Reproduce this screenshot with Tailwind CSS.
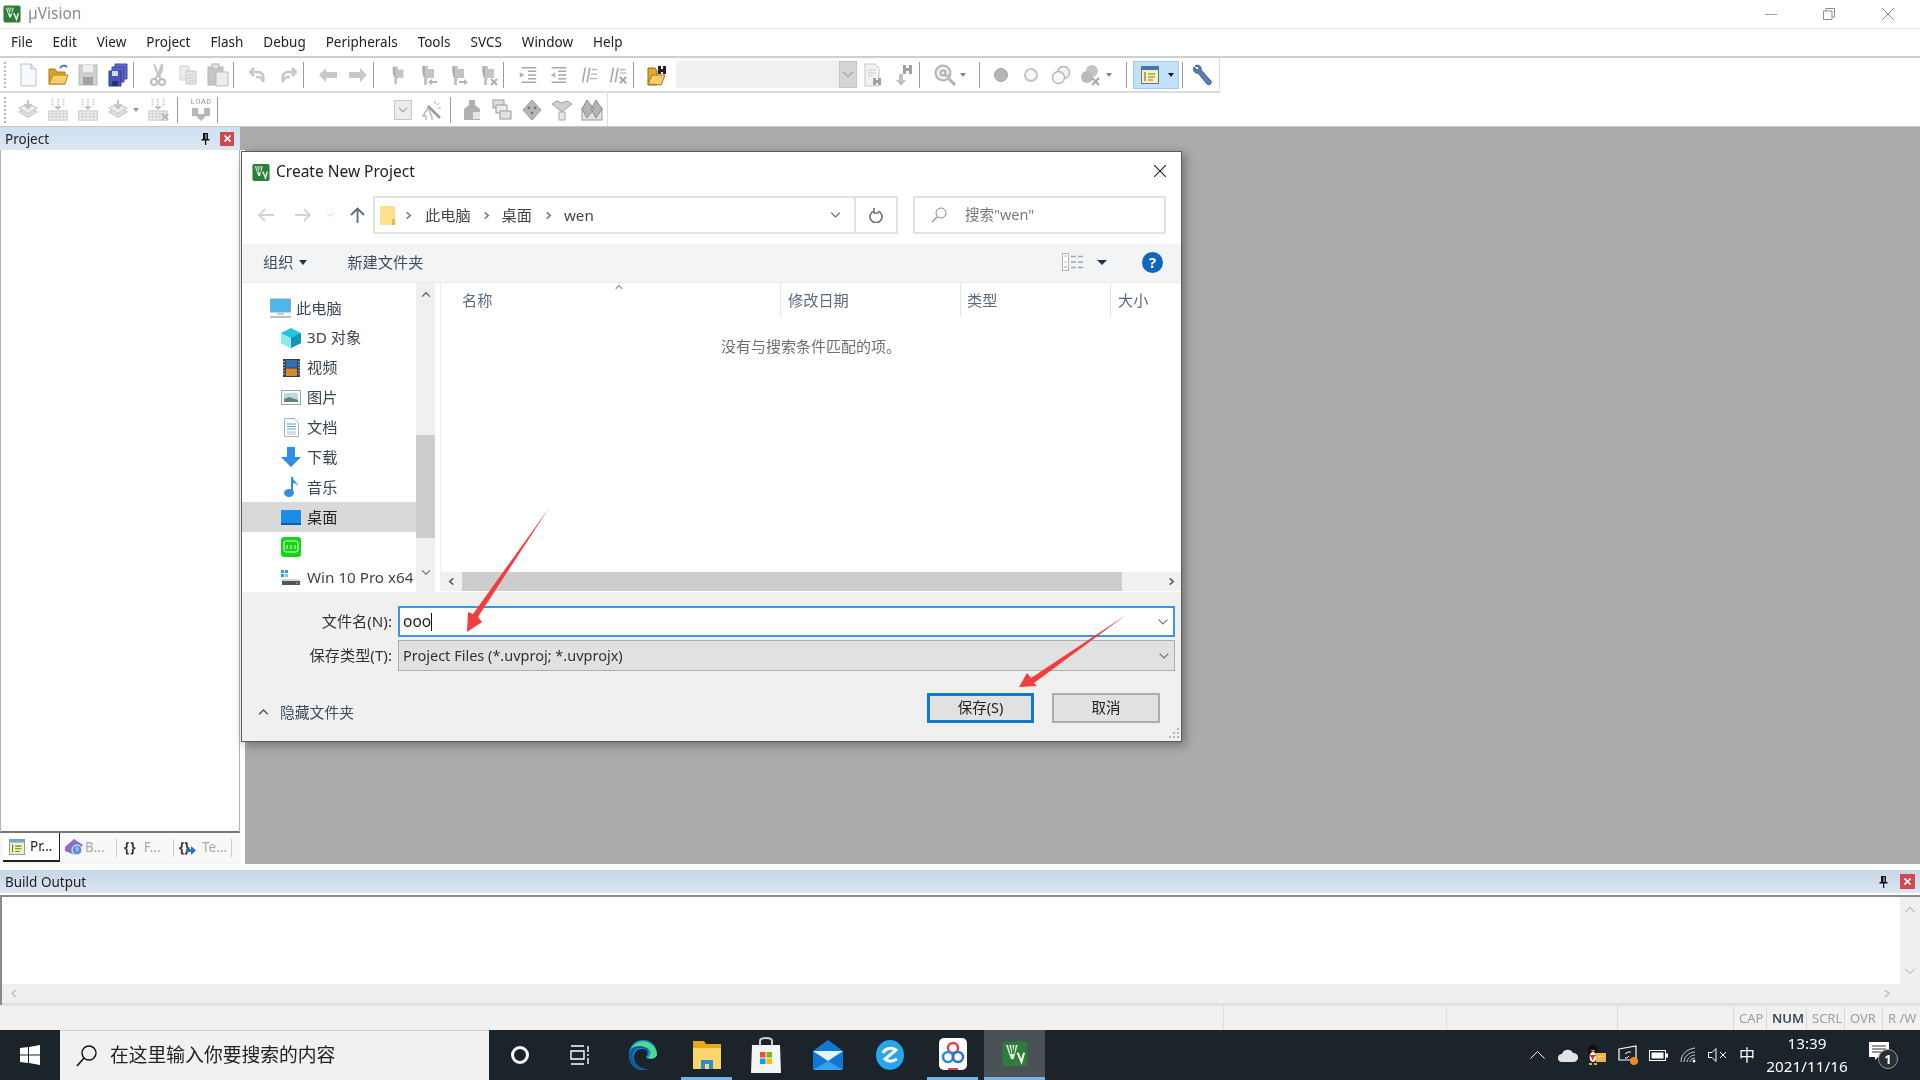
<!DOCTYPE html>
<html lang="zh">
<head>
<meta charset="utf-8">
<title>µVision</title>
<script src="https://cdn.jsdelivr.net/npm/@tailwindcss/browser@4"></script>
</head>
<body class="m-0 overflow-hidden bg-white">
<svg class="hidden" width="0" height="0">
  <defs>
    <symbol id="keil" viewBox="0 0 20 20">
      <rect x="0.5" y="0.5" width="19" height="19" rx="2" fill="#2f7d3a"/>
      <path d="M3 3h9l-3 11h-2z" fill="#d8ecd8"/>
      <path d="M5 3l2 7M7.5 3l1 7M10 3l-1 7" stroke="#2f7d3a" stroke-width="1"/>
      <path d="M12 9l3 7 2-7" fill="none" stroke="#e8f4e8" stroke-width="1.6"/>
    </symbol>
    <symbol id="bm" viewBox="0 0 24 24"><path d="M6 3h6v3h6v9h-6l-1 2v5H8v-8L6 9z" fill="#c4c4c4"/><path d="M8 3v11" stroke="#a5a5a5" stroke-width="1.5"/></symbol>
    <symbol id="ind" viewBox="0 0 24 24"><path d="M5 4h16M12 8h9M12 12h9M12 16h9M5 20h16" stroke="#a9a9a9" stroke-width="1.6"/><path d="M3 9l5 3-5 3z" fill="#b5b5b5"/></symbol>
    <symbol id="stack" viewBox="0 0 26 26"><path d="M13 10l10 5-10 6-10-6z" fill="#e2e2e2" stroke="#bdbdbd"/><path d="M13 6l10 5-10 6-10-6z" fill="#ececec" stroke="#bdbdbd"/><path d="M13 2v9M9 7l4 4 4-4" fill="none" stroke="#c2c2c2" stroke-width="2"/></symbol>
    <symbol id="grid" viewBox="0 0 26 26"><rect x="3" y="14" width="20" height="10" fill="#efefef" stroke="#c6c6c6"/><path d="M3 17h20M3 20h20M7 14v10M11 14v10M15 14v10M19 14v10" stroke="#d0d0d0"/><path d="M7 1v8M13 1v8M19 1v8" stroke="#cccccc" stroke-width="2" stroke-dasharray="1.5 1"/><path d="M9 9l4 4 4-4z" fill="#bbbbbb"/></symbol>
    <symbol id="cheveron" viewBox="0 0 10 10"><path d="M3 1.5L7 5 3 8.5" fill="none" stroke="currentColor" stroke-width="1.6"/></symbol>
    <symbol id="down" viewBox="0 0 14 10"><path d="M1.5 2L7 7.5 12.5 2" fill="none" stroke="currentColor" stroke-width="1.5"/></symbol>
    <symbol id="up" viewBox="0 0 14 10"><path d="M1.5 8L7 2.5 12.5 8" fill="none" stroke="currentColor" stroke-width="1.8"/></symbol>
  </defs>
</svg>

<div class="relative w-[1920px] h-[1080px] overflow-hidden flex flex-col bg-white text-[#1f1f1f] blur-[0.45px] font-['Noto_Sans','Noto_Sans_CJK_SC',sans-serif]">

  <!-- Title bar -->
  <div class="h-[29px] shrink-0 flex items-center border-b border-[#e4e4e4] pl-[3px]">
    <svg class="w-[18px] h-[20px]"><use href="#keil"/></svg>
    <span class="ml-[7px] text-[15.5px] text-[#8a8a8a]">µVision</span>
    <div class="ml-auto flex items-center h-full text-[#8f8f8f]">
      <svg class="w-[12px] h-[12px] mr-[46px]" viewBox="0 0 12 12"><path d="M0 6.5h12" stroke="#a0a0a0" stroke-width="1"/></svg>
      <svg class="w-[12px] h-[12px] mr-[47px]" viewBox="0 0 12 12"><path d="M0.5 3h8.5v8.5H0.5zM3 3V0.5h8.5V9H9" fill="none" stroke="#8f8f8f"/></svg>
      <svg class="w-[12px] h-[12px] mr-[26px]" viewBox="0 0 12 12"><path d="M0 0l12 12M12 0L0 12" stroke="#8f8f8f"/></svg>
    </div>
  </div>

  <!-- Menu -->
  <div class="h-[29px] shrink-0 flex items-center gap-[20px] pl-[11px] text-[13.5px] text-[#222] border-b-2 border-[#cfcfcf]">
    <span>File</span><span>Edit</span><span>View</span><span>Project</span><span>Flash</span><span>Debug</span><span>Peripherals</span><span>Tools</span><span>SVCS</span><span>Window</span><span>Help</span>
  </div>

  <!-- Toolbar 1 -->
  <div class="h-[35px] shrink-0 flex">
    <div class="w-[1220px] flex items-center pl-[4px] border-r border-b-2 border-[#dcdcdc]">
      <div class="w-[9px] h-[26px] border-l-2 border-dotted border-[#b5b5b5]"></div>
      <div class="w-[30px] flex justify-center"><svg class="w-[18px] h-[24px]" viewBox="0 0 18 24"><path d="M2 1h10l5 5v17H2z" fill="#f7f9fd" stroke="#b9c1d0"/><path d="M12 1v5h5" fill="#e3e8f2" stroke="#b9c1d0"/></svg></div>
      <div class="w-[30px] flex justify-center"><svg class="w-[22px] h-[24px]" viewBox="0 0 22 24"><path d="M2 6h6l2 3h8v12H2z" fill="#d9a227" stroke="#a87b17"/><path d="M2 21l4-9h15l-3 9z" fill="#f4cf6b" stroke="#b58a1f"/><path d="M13 5c2-3 5-3 7-1" fill="none" stroke="#3a75c4" stroke-width="2"/></svg></div>
      <div class="w-[30px] flex justify-center"><svg class="w-[20px] h-[22px]" viewBox="0 0 20 22"><rect x="1" y="1" width="18" height="20" fill="#cfcfcf" stroke="#b8b8b8"/><rect x="5" y="1" width="10" height="7" fill="#f0f0f0"/><rect x="5" y="13" width="10" height="8" fill="#a2a2a2"/></svg></div>
      <div class="w-[30px] flex justify-center"><svg class="w-[20px] h-[24px]" viewBox="0 0 20 24"><path d="M7 1h12v15H7z" fill="#5e6dc9" stroke="#3e4a9c"/><path d="M4 4h12v15H4z" fill="#5465c2" stroke="#3e4a9c"/><path d="M1 8h12v15H1z" fill="#4656b5" stroke="#343f90"/><rect x="4" y="8" width="6" height="5" fill="#cfd6f5"/><rect x="4" y="18" width="6" height="5" fill="#2a3370"/></svg></div>
      <i class="w-[10px] h-[26px] border-l border-[#9c9c9c]"></i>
      <div class="w-[30px] flex justify-center"><svg class="w-[16px] h-[24px]" viewBox="0 0 16 24"><path d="M4 1l4 11 4-11v6l-3 7M12 1" fill="none" stroke="#c6c6c6" stroke-width="2"/><circle cx="4" cy="19" r="3" fill="none" stroke="#bdbdbd" stroke-width="2"/><circle cx="12" cy="19" r="3" fill="none" stroke="#bdbdbd" stroke-width="2"/><path d="M8 12L5 16M8 12l3 4" stroke="#bdbdbd" stroke-width="2"/></svg></div>
      <div class="w-[30px] flex justify-center"><svg class="w-[20px] h-[20px]" viewBox="0 0 20 20"><path d="M2 1h9v14H2z" fill="#ececec" stroke="#cfcfcf"/><path d="M8 6h10v13H8z" fill="#e6e6e6" stroke="#c6c6c6"/><path d="M10 10h6M10 13h6M10 16h6" stroke="#c8c8c8"/></svg></div>
      <div class="w-[30px] flex justify-center"><svg class="w-[22px] h-[24px]" viewBox="0 0 22 24"><rect x="1" y="4" width="15" height="18" fill="#c6c6c6" stroke="#b2b2b2"/><rect x="5" y="1" width="7" height="5" fill="#e0e0e0" stroke="#b2b2b2"/><path d="M9 9h12v14H9z" fill="#ececec" stroke="#bbbbbb"/></svg></div>
      <i class="w-[10px] h-[26px] border-l border-[#9c9c9c]"></i>
      <div class="w-[30px] flex justify-center"><svg class="w-[18px] h-[18px]" viewBox="0 0 18 18"><path d="M5 2L1 6l4 4M2 6h7c5 0 6 4 5 10-1-4-2-5-5-5H7" fill="none" stroke="#c8c8c8" stroke-width="2.6"/></svg></div>
      <div class="w-[30px] flex justify-center"><svg class="w-[18px] h-[18px] -scale-x-100" viewBox="0 0 18 18"><path d="M5 2L1 6l4 4M2 6h7c5 0 6 4 5 10-1-4-2-5-5-5H7" fill="none" stroke="#c8c8c8" stroke-width="2.6"/></svg></div>
      <i class="w-[10px] h-[26px] border-l border-[#9c9c9c]"></i>
      <div class="w-[30px] flex justify-center"><svg class="w-[18px] h-[14px]" viewBox="0 0 18 14"><path d="M0 7l7-7v4h11v6H7v4z" fill="#c8c8c8"/></svg></div>
      <div class="w-[30px] flex justify-center"><svg class="w-[18px] h-[14px] -scale-x-100" viewBox="0 0 18 14"><path d="M0 7l7-7v4h11v6H7v4z" fill="#c8c8c8"/></svg></div>
      <i class="w-[10px] h-[26px] border-l border-[#9c9c9c]"></i>
      <div class="w-[30px] flex justify-center"><svg class="w-[22px] h-[22px]"><use href="#bm"/></svg></div>
      <div class="w-[30px] flex justify-center"><svg class="w-[24px] h-[24px]" viewBox="0 0 24 24"><use href="#bm"/><path d="M12 19l4-3v2h5v2h-5v2z" fill="#b5b5b5"/></svg></div>
      <div class="w-[30px] flex justify-center"><svg class="w-[24px] h-[24px]" viewBox="0 0 24 24"><use href="#bm"/><path d="M22 19l-4-3v2h-5v2h5v2z" fill="#b5b5b5"/></svg></div>
      <div class="w-[30px] flex justify-center"><svg class="w-[24px] h-[24px]" viewBox="0 0 24 24"><use href="#bm"/><path d="M15 16l6 6M21 16l-6 6" stroke="#b0b0b0" stroke-width="2"/></svg></div>
      <i class="w-[10px] h-[26px] border-l border-[#9c9c9c]"></i>
      <div class="w-[30px] flex justify-center"><svg class="w-[22px] h-[22px]"><use href="#ind"/></svg></div>
      <div class="w-[30px] flex justify-center"><svg class="w-[22px] h-[22px]" viewBox="0 0 24 24"><path d="M5 4h16M12 8h9M12 12h9M12 16h9M5 20h16" stroke="#a9a9a9" stroke-width="1.6"/><path d="M9 9l-5 3 5 3z" fill="#b5b5b5"/></svg></div>
      <div class="w-[30px] flex justify-center"><svg class="w-[22px] h-[22px]" viewBox="0 0 24 24"><path d="M6 20l3-16M11 20l3-16" stroke="#aaa" stroke-width="1.8"/><path d="M16 6h6M15 11h7M14 16h8" stroke="#b5b5b5" stroke-width="1.5"/></svg></div>
      <div class="w-[30px] flex justify-center"><svg class="w-[22px] h-[22px]" viewBox="0 0 24 24"><path d="M4 20l3-16M9 20l3-16" stroke="#aaa" stroke-width="1.8"/><path d="M14 6h6M14 10h7" stroke="#b5b5b5" stroke-width="1.5"/><path d="M14 14l7 7M21 14l-7 7" stroke="#a5a5a5" stroke-width="2"/></svg></div>
      <i class="w-[10px] h-[26px] border-l border-[#9c9c9c]"></i>
      <div class="w-[30px] flex justify-center"><svg class="w-[22px] h-[22px]" viewBox="0 0 22 22"><path d="M1 4h7l2 3v14H1z" fill="#e0a92c" stroke="#8c6a1a"/><path d="M1 20l4-9h13l-4 10z" fill="#f2cf66" stroke="#9c7a20"/><path d="M11 2h3v8h-3zM16 2h3v8h-3zM13 5h4v3h-4z" fill="#222"/></svg></div>
      <div class="ml-[3px] w-[181px] h-[27px] bg-[#f0f0f0] flex justify-end"><div class="w-[18px] bg-[#d4d4d4] border border-[#c4c4c4] flex items-center justify-center text-[#a8a8a8]"><svg class="w-[12px] h-[9px]"><use href="#down"/></svg></div></div>
      <div class="w-[32px] flex justify-center"><svg class="w-[20px] h-[24px]" viewBox="0 0 20 24"><path d="M2 1h10l4 4v18H2z" fill="#f3f3f3" stroke="#c6c6c6"/><path d="M5 7h8M5 10h8M5 13h5" stroke="#cccccc"/><path d="M10 15h3v7h-3zM15 15h3v7h-3zM12 17h4v3h-4z" fill="#a0a0a0"/></svg></div>
      <div class="w-[30px] flex justify-center"><svg class="w-[22px] h-[24px]" viewBox="0 0 22 24"><path d="M6 11h4v6h3l-5 6-5-6h3z" fill="#c0c0c0"/><path d="M10 2h3v9h-3zM16 2h3v9h-3zM12 5h5v3h-5z" fill="#a0a0a0"/></svg></div>
      <i class="w-[11px] h-[26px] border-l border-[#9c9c9c]"></i>
      <div class="w-[30px] flex justify-center"><svg class="w-[22px] h-[22px]" viewBox="0 0 22 22"><circle cx="9" cy="9" r="7.5" fill="#eee" stroke="#b5b5b5" stroke-width="2"/><circle cx="9" cy="9" r="2.5" fill="none" stroke="#a8a8a8" stroke-width="1.5"/><path d="M11.5 6v5c0 2 3 2 3-1" fill="none" stroke="#a8a8a8" stroke-width="1.3"/><path d="M15 15l6 6" stroke="#b0b0b0" stroke-width="3"/></svg></div>
      <div class="w-[12px]"><i class="block w-0 h-0 border-x-[3.5px] border-t-[4px] border-x-transparent border-t-[#888]"></i></div>
      <i class="ml-[7px] w-[7px] h-[26px] border-l border-[#9c9c9c]"></i>
      <div class="w-[30px] flex justify-center"><span class="block w-[14px] h-[14px] rounded-full bg-[#b5b5b5] border border-[#a5a5a5]"></span></div>
      <div class="w-[30px] flex justify-center"><span class="block w-[14px] h-[14px] rounded-full bg-[#f7f7f7] border-2 border-[#c5c5c5]"></span></div>
      <div class="w-[30px] flex justify-center"><svg class="w-[20px] h-[20px]" viewBox="0 0 20 20"><circle cx="12.5" cy="7.5" r="6" fill="#f4f4f4" stroke="#b5b5b5" stroke-width="1.4"/><circle cx="7.5" cy="12.5" r="6" fill="#f8f8f8" stroke="#b5b5b5" stroke-width="1.4"/></svg></div>
      <div class="w-[30px] flex justify-center"><svg class="w-[22px] h-[22px]" viewBox="0 0 22 22"><circle cx="12" cy="7" r="6" fill="#c4c4c4"/><circle cx="7" cy="13" r="6" fill="#bbbbbb"/><path d="M12 14l7 7M19 14l-7 7" stroke="#a8a8a8" stroke-width="2"/></svg></div>
      <div class="w-[14px]"><i class="block w-0 h-0 border-x-[3.5px] border-t-[4px] border-x-transparent border-t-[#888]"></i></div>
      <i class="ml-[6px] w-[7px] h-[26px] border-l border-[#9c9c9c]"></i>
      <div class="w-[46px] h-[28px] bg-[#c4e1fb] border border-[#9dccf5] flex items-center pl-[7px] gap-[9px]">
        <svg class="w-[18px] h-[18px]" viewBox="0 0 18 18"><rect x="0.5" y="0.5" width="17" height="17" fill="#f5f0c4" stroke="#5d7590"/><rect x="1" y="1" width="16" height="3" fill="#3d78c4"/><path d="M4 6v9M7 8h7M7 11h7M7 14h5" stroke="#7a7a20" stroke-width="1.2"/></svg>
        <i class="block w-0 h-0 border-x-[3.5px] border-t-[4px] border-x-transparent border-t-[#111]"></i>
      </div>
      <i class="ml-[3px] w-[6px] h-[26px] border-l border-[#9c9c9c]"></i>
      <div class="w-[30px] flex justify-center"><svg class="w-[20px] h-[22px]" viewBox="0 0 20 22"><path d="M2 2c3-2 7 0 6 4l10 11c1 3-2 5-4 3L5 9C2 10-1 6 1 3l3 3 2-1 0-2z" fill="#5a7fb0" stroke="#3d5c8a"/></svg></div>
    </div>
    <div class="flex-1"></div>
  </div>

  <!-- Toolbar 2 -->
  <div class="h-[34px] shrink-0 flex border-b border-[#c8c8c8]">
    <div class="w-[608px] flex items-center pl-[4px] border-r border-[#e0e0e0]">
      <div class="w-[9px] h-[26px] border-l-2 border-dotted border-[#b5b5b5]"></div>
      <div class="w-[30px] flex justify-center"><svg class="w-[24px] h-[24px]"><use href="#stack"/></svg></div>
      <div class="w-[30px] flex justify-center"><svg class="w-[24px] h-[24px]"><use href="#grid"/></svg></div>
      <div class="w-[30px] flex justify-center"><svg class="w-[24px] h-[24px]"><use href="#grid"/></svg></div>
      <div class="w-[30px] flex justify-center"><svg class="w-[24px] h-[24px]"><use href="#stack"/></svg></div>
      <div class="w-[10px]"><i class="block w-0 h-0 border-x-[3.5px] border-t-[4px] border-x-transparent border-t-[#999]"></i></div>
      <div class="w-[30px] flex justify-center"><svg class="w-[24px] h-[24px]" viewBox="0 0 26 26"><use href="#grid"/><path d="M17 17l7 7M24 17l-7 7" stroke="#b5b5b5" stroke-width="2"/></svg></div>
      <i class="ml-[4px] w-[8px] h-[26px] border-l border-[#9c9c9c]"></i>
      <div class="w-[32px] flex flex-col items-center leading-none">
        <span class="text-[8px] tracking-[0.5px] text-[#999] font-['Liberation_Mono',monospace]">LOAD</span>
        <svg class="w-[20px] h-[14px] mt-[1px]" viewBox="0 0 20 14"><path d="M1 1h6v6h3v7L5 9H1zM13 1h6v8h-4l-5 5V7h3z" fill="#b8b8b8"/></svg>
      </div>
      <i class="w-[177px] h-[26px] border-l border-[#9c9c9c]"></i>
      <div class="w-[18px] h-[20px] bg-[#ececec] border border-[#c6c6c6] flex items-center justify-center text-[#9a9a9a]"><svg class="w-[10px] h-[8px]"><use href="#down"/></svg></div>
      <div class="ml-[5px] w-[30px] flex justify-center"><svg class="w-[22px] h-[24px]" viewBox="0 0 22 24"><path d="M7 8l12 12" stroke="#9a9a9a" stroke-width="2.5"/><path d="M7 10L2 18h3v4M7 10l4 9v3" fill="none" stroke="#bbb" stroke-width="1.5"/><path d="M14 3v3M18 5l-2 2M20 10h-3" stroke="#c8c8c8" stroke-width="1.5"/></svg></div>
      <i class="ml-[3px] w-[7px] h-[26px] border-l border-[#9c9c9c]"></i>
      <div class="w-[30px] flex justify-center"><svg class="w-[20px] h-[22px]" viewBox="0 0 20 22"><path d="M7 1h6v5l5 4v11H2V10l5-4z" fill="#b0b0b0"/><rect x="11" y="13" width="7" height="7" fill="#e6e6e6"/></svg></div>
      <div class="w-[30px] flex justify-center"><svg class="w-[20px] h-[22px]" viewBox="0 0 20 22"><rect x="1" y="1" width="11" height="8" fill="#ddd" stroke="#999"/><rect x="4" y="6" width="11" height="8" fill="#ececec" stroke="#999"/><rect x="8" y="12" width="11" height="8" fill="#e0e0e0" stroke="#999"/></svg></div>
      <div class="w-[30px] flex justify-center"><svg class="w-[20px] h-[22px]" viewBox="0 0 20 22"><path d="M10 1l9 10-9 10L1 11z" fill="#b8b8b8" stroke="#999"/><circle cx="7" cy="9" r="1.4" fill="#777"/><circle cx="13" cy="9" r="1.4" fill="#777"/><circle cx="10" cy="14" r="1.4" fill="#777"/></svg></div>
      <div class="w-[30px] flex justify-center"><svg class="w-[22px] h-[22px]" viewBox="0 0 22 22"><path d="M1 5l5-3 5 2 5-2 5 3-10 8v8l-0 0-0-8z" fill="#cfcfcf" stroke="#a0a0a0"/><path d="M8 13h6v8H8z" fill="#e8e8e8" stroke="#a8a8a8"/></svg></div>
      <div class="w-[30px] flex justify-center"><svg class="w-[24px] h-[24px]" viewBox="0 0 24 24"><rect x="2" y="10" width="20" height="12" fill="#e2e2e2" stroke="#999"/><path d="M7 2l7 9-7 9-5-9zM16 2l6 9-6 9-5-9z" fill="#b5b5b5" stroke="#8e8e8e"/></svg></div>
    </div>
  </div>

  <!-- Workspace -->
  <div class="flex-1 min-h-0 flex bg-[#ababab]">
    <div class="w-[240px] shrink-0 flex flex-col bg-white">
      <div class="h-[23px] shrink-0 flex items-center pl-[5px] text-[13.5px] text-[#222] bg-gradient-to-b from-[#cfe0f0] to-[#dbe7f3]">
        <span class="pt-[2px]">Project</span>
        <svg class="ml-auto w-[9px] h-[13px]" viewBox="0 0 9 13"><path d="M2 1h5v6h1.5v1.5H5.2V13H4V8.5H.5V7H2z" fill="#111"/><path d="M5 2v5" stroke="#dbe7f3"/></svg>
        <div class="ml-[10px] mr-[6px] w-[14px] h-[14px] bg-[#cf4a4f] flex items-center justify-center"><svg class="w-[7px] h-[7px]" viewBox="0 0 7 7"><path d="M0.5 0.5l6 6M6.5 0.5l-6 6" stroke="#fff" stroke-width="1.6"/></svg></div>
      </div>
      <div class="flex-1 min-h-0 border-x border-b-2 border-[#b5b5b5] border-b-[#777]"></div>
      <div class="h-[29px] shrink-0 flex items-center pl-[3px] text-[13.5px] bg-[#f8f8f8]">
        <div class="w-[57px] h-[29px] bg-white flex items-center pl-[5px] gap-[4px] border-r border-b-2 border-[#222] text-[#222]">
          <svg class="w-[18px] h-[16px]" viewBox="0 0 18 18"><rect x="0.5" y="0.5" width="17" height="17" fill="#f5f0c4" stroke="#7d94ad"/><rect x="1" y="1" width="16" height="3" fill="#7aa3d6"/><path d="M4 6v9M7 8h7M7 11h7M7 14h5" stroke="#7a7a20" stroke-width="1.2"/></svg>
          <span>Pr...</span>
        </div>
        <div class="w-[57px] flex items-center pl-[4px] gap-[1px] text-[#a8a8a8] border-r border-[#ccc] h-[18px]">
          <svg class="w-[20px] h-[20px] shrink-0" viewBox="0 0 20 20"><path d="M1 9l9-8 9 6-8 10-10-4z" fill="#8d6bd0"/><circle cx="13" cy="12" r="5" fill="#5a8fd0" stroke="#fff"/><path d="M11.5 10.5c1-1.500 3-.5 2.500 1l-1 1v1" fill="none" stroke="#fff"/></svg>
          <span>B...</span>
        </div>
        <div class="w-[57px] flex items-center pl-[7px] gap-[7px] text-[#a8a8a8] border-r border-[#ccc] h-[18px]">
          <span class="text-[#333] font-bold tracking-[1px]">{}</span><span>F...</span>
        </div>
        <div class="w-[58px] flex items-center pl-[5px] gap-[3px] text-[#a8a8a8] border-r border-[#ccc] h-[18px]">
          <span class="relative text-[#333] font-bold w-[15px]">{}<svg class="absolute left-[7px] top-[9px] w-[10px] h-[9px]" viewBox="0 0 10 9"><path d="M0 3h5V0l5 4.5L5 9V6H0z" fill="#2f6fcf"/></svg></span><span class="ml-[5px]">Te...</span>
        </div>
      </div>
      <div class="h-[2px] shrink-0 bg-[#f5f5f5]"></div>
    </div>
    <div class="w-[5px] shrink-0 mt-[23px] bg-white"></div>
    <div class="flex-1"></div>
  </div>

  <!-- Build output -->
  <div class="h-[141px] shrink-0 flex flex-col bg-white">
    <div class="h-[6px] shrink-0 bg-white"></div>
    <div class="h-[23px] shrink-0 flex items-center pl-[5px] text-[13.5px] text-[#222] bg-gradient-to-b from-[#c6d6e6] to-[#dbe7f3]">
      <span class="pt-[2px]">Build Output</span>
      <svg class="ml-auto w-[9px] h-[13px]" viewBox="0 0 9 13"><path d="M2 1h5v6h1.5v1.5H5.2V13H4V8.5H.5V7H2z" fill="#111"/><path d="M5 2v5" stroke="#dbe7f3"/></svg>
      <div class="ml-[12px] mr-[5px] w-[15px] h-[15px] bg-[#cf4a4f] flex items-center justify-center"><svg class="w-[7px] h-[7px]" viewBox="0 0 7 7"><path d="M0.5 0.5l6 6M6.5 0.5l-6 6" stroke="#fff" stroke-width="1.6"/></svg></div>
    </div>
    <div class="h-[2px] shrink-0 bg-white"></div>
    <div class="flex-1 min-h-0 flex flex-col border-t-2 border-l-2 border-[#8a8a8a]">
      <div class="flex-1 min-h-0 flex">
        <div class="flex-1 bg-white"></div>
        <div class="w-[20px] bg-[#efefef] flex flex-col items-center justify-between py-[8px] text-[#c4c4c4]">
          <svg class="w-[12px] h-[9px]"><use href="#up"/></svg><svg class="w-[12px] h-[9px]"><use href="#down"/></svg>
        </div>
      </div>
      <div class="h-[19px] shrink-0 bg-[#efefef] flex items-center justify-between px-[7px] pr-[28px] text-[#c0c0c0]">
        <svg class="w-[10px] h-[11px] -scale-x-100" viewBox="0 0 10 10"><use href="#cheveron"/></svg>
        <svg class="w-[10px] h-[11px]" viewBox="0 0 10 10"><use href="#cheveron"/></svg>
      </div>
      <div class="h-[2px] shrink-0 bg-[#e0e0e0]"></div>
    </div>
  </div>

  <!-- Status bar -->
  <div class="h-[25px] shrink-0 flex items-center bg-[#f1f1f1] text-[13px] text-[#9aa0a6] border-t border-[#e2e2e2]">
    <div class="w-[1223px] h-full"></div>
    <div class="w-[223px] h-full border-l border-[#dedede]"></div>
    <div class="w-[171px] h-full border-l border-[#dedede]"></div>
    <div class="w-[116px] h-full border-l border-[#d8d8d8]"></div>
    <div class="flex-1 flex h-full items-center border-l border-[#d8d8d8] leading-none pt-px">
      <span class="w-[32px] pl-[5px] h-full flex items-center">CAP</span>
      <span class="w-[40px] pl-[5px] h-full flex items-center border-l border-[#d8d8d8] text-[#3c4a5c] font-semibold">NUM</span>
      <span class="w-[38px] pl-[5px] h-full flex items-center border-l border-[#d8d8d8]">SCRL</span>
      <span class="w-[38px] pl-[5px] h-full flex items-center border-l border-[#d8d8d8]">OVR</span>
      <span class="pl-[5px] h-full flex items-center border-l border-[#d8d8d8] whitespace-nowrap">R /W</span>
    </div>
  </div>

  <!-- Taskbar -->
  <div class="h-[50px] shrink-0 flex items-center bg-[#1b242b] text-white">
    <div class="w-[60px] h-full flex items-center justify-center">
      <svg class="w-[20px] h-[20px]" viewBox="0 0 20 20"><path d="M0 3l8-1v7.500H0zM9 2l11-2v9.500H9zM0 10.500h8V18l-8-1zM9 10.500h11V20L9 18z" fill="#fff"/></svg>
    </div>
    <div class="w-[429px] h-full bg-[#f1f1f1] flex items-center pl-[15px] text-[#222] text-[18.800px] border-t border-[#d0d0d0]">
      <svg class="w-[24px] h-[26px] shrink-0" viewBox="0 0 24 26"><circle cx="14" cy="10" r="7" fill="none" stroke="#111" stroke-width="1.400"/><path d="M9 15L2 23" stroke="#111" stroke-width="1.600"/></svg>
      <span class="ml-[11px] whitespace-nowrap">在这里输入你要搜索的内容</span>
    </div>
    <div class="w-[61px] h-full flex items-center justify-center"><span class="block w-[18px] h-[18px] rounded-full border-[3px] border-white"></span></div>
    <div class="w-[60px] h-full flex items-center justify-center"><svg class="w-[20px] h-[20px]" viewBox="0 0 20 20"><path d="M1 1h13M1 19h13M1 6h13v8H1zM18 1v6M18 9v2M18 13v6" fill="none" stroke="#fff" stroke-width="1.400"/></svg></div>
    <div class="ml-[17px] w-[32px] h-full flex items-center justify-center"><svg class="w-[32px] h-[32px] shrink-0" viewBox="0 0 32 32"><path d="M2 16C2 7 8 1 16 1c8 0 14 6 14 14 0 3-3 5-7 5-3 0-4-1-4-2 3-2 3-8-4-8-6 0-9 5-8 10 1 6 7 11 14 10-2 1-4 1-5 1C8 31 2 25 2 16z" fill="#1f8dd6"/><path d="M2 16C3 9 9 6 15 7c6 1 9 5 4 11 3-6-1-9-5-9-6 0-9 5-8 10 1 6 7 11 14 11-2 1-3 1-4 1C8 31 2 25 2 16z" fill="#0c59a4"/><path d="M5 9c3-6 12-9 19-4 4 3 6 7 6 11-1 3-5 4-9 3 4-4 3-8-1-10-6-3-12-2-15 0z" fill="#4fdc8a"/></svg></div>
    <div class="ml-[22px] w-[51px] h-full relative flex items-center justify-center border-b-[3px] border-[#76b3e6]">
      <svg class="w-[28px] h-[30px]" viewBox="0 0 28 30"><path d="M0 2h11l2 3h15v23H0z" fill="#e8a917"/><path d="M0 9h28v21H0z" fill="#fbd46b"/><path d="M8 30v-9h12v9h-4v-5h-4v5z" fill="#2a8ed6"/></svg>
    </div>
    <div class="ml-[18px] w-[32px] h-full flex items-center justify-center"><svg class="w-[30px] h-[36px] shrink-0" viewBox="0 0 30 36"><path d="M9 8V4c0-4 12-4 12 0v4" fill="none" stroke="#d0d0d0" stroke-width="2"/><path d="M1 8h28l1 28H0z" fill="#f5f5f5"/><rect x="9" y="15" width="5.500" height="5.500" fill="#f25022"/><rect x="15.500" y="15" width="5.500" height="5.500" fill="#7fba00"/><rect x="9" y="21.500" width="5.500" height="5.500" fill="#00a4ef"/><rect x="15.500" y="21.500" width="5.500" height="5.500" fill="#ffb900"/></svg></div>
    <div class="ml-[30px] w-[32px] h-full flex items-center justify-center"><svg class="w-[30px] h-[30px] shrink-0" viewBox="0 0 30 30"><path d="M0 11L15 0l15 11v19H0z" fill="#0f78d4"/><path d="M0 11h30L15 21z" fill="#e6f2fb"/><path d="M0 30l15-9 15 9z" fill="#3aa0ea"/></svg></div>
    <div class="ml-[32px] w-[28px] h-full flex items-center justify-center"><svg class="w-[28px] h-[30px] shrink-0" viewBox="0 0 28 30"><ellipse cx="14" cy="15" rx="14" ry="15" fill="#27a6ee"/><path d="M7 13c2-5 9-6 13-3L9 19c3 3 7 3 12 0" fill="none" stroke="#fff" stroke-width="3"/></svg></div>
    <div class="ml-[23px] w-[51px] h-full flex items-center justify-center border-b-[3px] border-[#76b3e6]"><svg class="w-[28px] h-[32px] shrink-0" viewBox="0 0 28 32"><rect width="28" height="32" rx="5" fill="#fff"/><circle cx="14" cy="10" r="5" fill="none" stroke="#e0405a" stroke-width="2.500"/><circle cx="9" cy="19" r="5" fill="none" stroke="#2a8ed6" stroke-width="2.500"/><circle cx="19" cy="19" r="5" fill="none" stroke="#2a6ed6" stroke-width="2.500"/><rect x="9" y="30" width="10" height="2" fill="#e0405a"/></svg></div>
    <div class="ml-[6px] w-[61px] h-full flex items-center justify-center bg-[#4a5157] border-b-[3px] border-[#76b3e6]"><svg class="w-[26px] h-[32px]" preserveAspectRatio="none"><use href="#keil"/></svg></div>
    <div class="flex-1"></div>
    <div class="flex items-center h-full">
      <svg class="w-[15px] h-[8px] mr-[13px]" viewBox="0 0 15 8"><path d="M0.500 7.500L7.500 0.500l7 7" fill="none" stroke="#fff"/></svg>
      <svg class="w-[20px] h-[13px] mr-[8px]" viewBox="0 0 20 13"><path d="M4 13a4 4 0 010-8 6 6 0 0111-1 4.500 4.500 0 011 9z" fill="#e3e3e3"/></svg>
      <svg class="w-[20px] h-[22px] mr-[12px]" viewBox="0 0 20 22"><ellipse cx="7" cy="9" rx="5.500" ry="8.500" fill="#111"/><ellipse cx="7" cy="13" rx="3.500" ry="5" fill="#fff"/><path d="M4.500 6h5l-2.500 2z" fill="#f5a623"/><path d="M2 11h9l-3 2-1 4-2-4z" fill="#e03030"/><rect x="10" y="9" width="10" height="9" fill="#f0b640"/><path d="M12 12.500h6" stroke="#fff" stroke-dasharray="1.500 1"/><path d="M3 20h3M8 20h3" stroke="#f5a623" stroke-width="2"/></svg>
      <svg class="w-[21px] h-[20px] mr-[10px]" viewBox="0 0 21 20"><path d="M1 4l17-3v14H1z" fill="none" stroke="#fff" stroke-width="1.200"/><path d="M7 9l3-2h3M11 11l-2 2H7" fill="none" stroke="#fff"/><circle cx="16" cy="16" r="4" fill="#f08a1d"/></svg>
      <svg class="w-[19px] h-[11px] mr-[12px]" viewBox="0 0 19 11"><rect x="0.500" y="0.500" width="16" height="10" fill="none" stroke="#fff"/><rect x="2.500" y="2.500" width="12" height="6" fill="#fff"/><rect x="17" y="3.500" width="2" height="4" fill="#fff"/></svg>
      <svg class="w-[16px] h-[16px] mr-[12px]" viewBox="0 0 16 16"><path d="M1 15C1 7 7 2 15 1M4 15c0-5 5-10 11-10M7 15c0-3 4-7 8-7M10 15c0-2 2-4 5-4" fill="none" stroke="#e0e0e0" stroke-width="0.900"/><circle cx="14" cy="14" r="1.500" fill="#fff"/></svg>
      <svg class="w-[20px] h-[14px] mr-[11px]" viewBox="0 0 20 14"><path d="M0.500 4.500H4L8 .5v13l-4-4H.5z" fill="none" stroke="#fff"/><path d="M12 4l6 6M18 4l-6 6" stroke="#fff"/></svg>
      <span class="text-[16px] w-[16px] mr-[2px]">中</span>
      <div class="w-[100px] flex flex-col items-center text-[15.300px] leading-[23px] mr-[12px]"><span>13:39</span><span>2021/11/16</span></div>
      <div class="relative w-[24px] h-[28px] mr-[27px]">
        <svg class="w-[20px] h-[18px] absolute left-0 top-[1px]" viewBox="0 0 20 18"><path d="M0 0h20v15H9l-3 3v-3H0z" fill="#fff"/><path d="M3 4h14M3 7h14M3 10h14" stroke="#333"/></svg>
        <span class="absolute left-[9px] top-[8px] w-[20px] h-[20px] rounded-full bg-[#2a2f33] border border-[#999] text-[13px] leading-[18px] text-center font-bold">1</span>
      </div>
    </div>
  </div>

  <!-- Dialog -->
  <div class="absolute left-[241px] top-[151px] w-[941px] h-[591px] flex flex-col bg-white border border-[#5c5c5c] shadow-[3px_3px_10px_rgba(0,0,0,0.35)] text-[15px]">
    <div class="h-[44px] shrink-0 flex items-center pl-[10px] pb-[4px] relative">
      <svg class="w-[18px] h-[19px]"><use href="#keil"/></svg>
      <span class="ml-[6px] text-[15.500px] text-[#222]">Create New Project</span>
      <svg class="absolute right-[15px] top-[13px] w-[12px] h-[12px]" viewBox="0 0 12 12"><path d="M0 0l12 12M12 0L0 12" stroke="#222" stroke-width="1.100"/></svg>
    </div>
    <div class="h-[48px] shrink-0 flex items-start">
      <div class="w-[131px] h-[38px] flex items-center relative text-[#cfd3d8]">
        <svg class="absolute left-[16px] w-[16px] h-[14px]" viewBox="0 0 16 14"><path d="M7 1L1 7l6 6M1 7h15" fill="none" stroke="#d0d4d9" stroke-width="1.800"/></svg>
        <svg class="absolute left-[53px] w-[16px] h-[14px] -scale-x-100" viewBox="0 0 16 14"><path d="M7 1L1 7l6 6M1 7h15" fill="none" stroke="#d0d4d9" stroke-width="1.800"/></svg>
        <svg class="absolute left-[84px] w-[9px] h-[6px]" viewBox="0 0 14 10"><use href="#down"/></svg>
        <svg class="absolute left-[108px] w-[15px] h-[16px]" viewBox="0 0 15 16"><path d="M1 8l6.500-6.500L14 8M7.500 2v14" fill="none" stroke="#5f6a75" stroke-width="1.800"/></svg>
      </div>
      <div class="w-[525px] h-[38px] flex items-center border-2 border-[#e3e3e3] relative text-[#444] text-[15.200px]">
        <svg class="ml-[5px] w-[16px] h-[20px]" viewBox="0 0 16 20"><path d="M0 1h15v19H0z" fill="#fde08b"/><path d="M12 14h3v6h-3z" fill="#e8b93f"/></svg>
        <svg class="ml-[8px] w-[9px] h-[9px] text-[#777]"><use href="#cheveron"/></svg>
        <span class="ml-[12px]">此电脑</span>
        <svg class="ml-[11px] w-[9px] h-[9px] text-[#777]"><use href="#cheveron"/></svg>
        <span class="ml-[11px]">桌面</span>
        <svg class="ml-[12px] w-[9px] h-[9px] text-[#777]"><use href="#cheveron"/></svg>
        <span class="ml-[11px]">wen</span>
        <svg class="absolute right-[55px] w-[11px] h-[8px] text-[#666]"><use href="#down"/></svg>
        <div class="absolute right-0 top-0 h-full w-[42px] border-l-2 border-[#e3e3e3] flex items-center justify-center">
          <svg class="w-[14px] h-[15px]" viewBox="0 0 14 15"><path d="M9 3a6 6 0 11-4 0" fill="none" stroke="#777" stroke-width="1.700"/><path d="M5 0v5h5" fill="none" stroke="#777" stroke-width="1.700"/></svg>
        </div>
      </div>
      <div class="ml-[15px] w-[253px] h-[38px] flex items-center border-2 border-[#e3e3e3] text-[#7a7a7a] text-[14.500px]">
        <svg class="ml-[16px] w-[16px] h-[16px]" viewBox="0 0 16 16"><circle cx="10" cy="6" r="5" fill="none" stroke="#8a8a8a"/><path d="M6.500 9.500L1 15" stroke="#c28a6a" stroke-width="1.200"/></svg>
        <span class="ml-[18px]">搜索"wen"</span>
      </div>
    </div>
    <div class="h-[39px] shrink-0 flex items-center pb-[2px] bg-[#f3f4f6] text-[#3c4d60] text-[15.200px] border-b border-[#ececec]">
      <span class="ml-[21px]">组织</span>
      <i class="ml-[6px] block w-0 h-0 border-x-[4.500px] border-t-[5px] border-x-transparent border-t-[#1f3350]"></i>
      <span class="ml-[40px]">新建文件夹</span>
      <svg class="ml-auto w-[22px] h-[18px]" viewBox="0 0 22 18"><rect x="0.500" y="0.500" width="6" height="17" fill="#fff" stroke="#b0b0b0"/><path d="M2.500 3h2M2.500 9h2" stroke="#8a9aa8"/><path d="M2.500 14h2" stroke="#d04040"/><path d="M9 3.500h5M16 3.500h5M9 9h5M16 9h5M9 14.500h5M16 14.500h5" stroke="#a0a6ad" stroke-width="1.300"/></svg>
      <i class="ml-[13px] block w-0 h-0 border-x-[5px] border-t-[5px] border-x-transparent border-t-[#1f3350]"></i>
      <span class="ml-[35px] mr-[18px] w-[21px] h-[21px] rounded-full bg-[#0f66bd] text-white text-[15px] leading-[21px] text-center font-bold">?</span>
    </div>
    <div class="h-[309px] shrink-0 flex text-[#3a4654]">
      <!-- Tree -->
      <div class="w-[174px] shrink-0 pt-[10px] flex flex-col text-[15.200px]">
        <div class="h-[30px] flex items-center pl-[28px]">
          <svg class="w-[21px] h-[20px]" viewBox="0 0 21 20"><rect x="0.500" y="1" width="20" height="13" fill="#4cb6ee" stroke="#8fa8b8"/><path d="M7 14h7v3H7z" fill="#c5ced6"/><path d="M0 18h21v2H0z" fill="#b5c2cd"/></svg>
          <span class="ml-[5px]">此电脑</span>
        </div>
        <div class="h-[30px] flex items-center pl-[39px]">
          <svg class="w-[20px] h-[20px]" viewBox="0 0 20 20"><path d="M10 0l10 5v10l-10 5L0 15V5z" fill="#26c4d9"/><path d="M10 10l10-5v10l-10 5z" fill="#1196b8"/><path d="M0 5l10 5v10L0 15z" fill="#8ee8ee"/></svg>
          <span class="ml-[6px]">3D 对象</span>
        </div>
        <div class="h-[30px] flex items-center pl-[41px]">
          <svg class="w-[17px] h-[18px]" viewBox="0 0 17 18"><rect width="17" height="18" fill="#3a3f4a"/><rect x="3" y="1" width="11" height="7.500" fill="#2f6fc0"/><rect x="3" y="9.500" width="11" height="7.500" fill="#d08a30"/><path d="M1 2v14" stroke="#ddd" stroke-dasharray="1.500 1.500"/><path d="M16 2v14" stroke="#ddd" stroke-dasharray="1.500 1.500"/></svg>
          <span class="ml-[7px]">视频</span>
        </div>
        <div class="h-[30px] flex items-center pl-[39px]">
          <svg class="w-[20px] h-[15px]" viewBox="0 0 20 15"><rect x="0.500" y="0.500" width="19" height="14" fill="#f7f9fb" stroke="#9aa6b0"/><rect x="3" y="3" width="14" height="9" fill="#bcd9e8"/><path d="M3 9l5-2 9 3v2H3z" fill="#5a8a70"/></svg>
          <span class="ml-[6px]">图片</span>
        </div>
        <div class="h-[30px] flex items-center pl-[42px]">
          <svg class="w-[15px] h-[19px]" viewBox="0 0 15 19"><path d="M0.500 0.500h10l4 4v14H.5z" fill="#fff" stroke="#a8b2bb"/><path d="M3 6h9M3 8.500h9M3 11h9" stroke="#4a9de0"/><path d="M3 14h9M3 16h9" stroke="#b5bcc2"/></svg>
          <span class="ml-[8px]">文档</span>
        </div>
        <div class="h-[30px] flex items-center pl-[39px]">
          <svg class="w-[20px] h-[20px]" viewBox="0 0 20 20"><path d="M6 0h8v10h6L10 20 0 10h6z" fill="#2f8fe6"/></svg>
          <span class="ml-[6px]">下载</span>
        </div>
        <div class="h-[30px] flex items-center pl-[42px]">
          <svg class="w-[14px] h-[20px]" viewBox="0 0 14 20"><ellipse cx="5" cy="16" rx="5" ry="4" fill="#2f8fe6"/><path d="M7 0h2c0 5 5 5 5 10-1-3-3-4-5-4v10H7z" fill="#2f8fe6"/></svg>
          <span class="ml-[9px]">音乐</span>
        </div>
        <div class="h-[30px] flex items-center pl-[39px] bg-[#d9d9d9] text-[#222]">
          <svg class="w-[20px] h-[15px]" viewBox="0 0 20 15"><rect width="20" height="15" fill="#1a8de8"/><rect y="13" width="20" height="2" fill="#0f5ea8"/></svg>
          <span class="ml-[6px]">桌面</span>
        </div>
        <div class="h-[30px] flex items-center pl-[39px]">
          <svg class="w-[20px] h-[20px]" viewBox="0 0 20 20"><rect width="20" height="20" rx="3" fill="#14d414"/><rect x="3" y="4" width="14" height="11" rx="2" fill="none" stroke="#d8ffd8"/><path d="M6 8v4M10 8v4M14 8v4" stroke="#d8ffd8"/></svg>
        </div>
        <div class="h-[30px] flex items-center pl-[39px] overflow-hidden whitespace-nowrap">
          <svg class="w-[20px] h-[15px] shrink-0" viewBox="0 0 20 15"><rect x="0" y="0" width="3" height="3" fill="#2a9de8"/><rect x="4" y="0" width="3" height="3" fill="#2a9de8"/><rect x="0" y="4" width="3" height="3" fill="#2a9de8"/><rect x="4" y="4" width="3" height="3" fill="#7cc6f2"/><path d="M1 9h17l1 3H1z" fill="#d5d5d5"/><rect x="1" y="11" width="18" height="4" fill="#555"/><rect x="15" y="12.500" width="2" height="1" fill="#6fe06f"/></svg>
          <span class="ml-[6px]">Win 10 Pro x64</span>
        </div>
      </div>
      <div class="w-[19px] shrink-0 bg-[#f0f0f0] flex flex-col items-center text-[#606060]">
        <svg class="mt-[8px] w-[10px] h-[7px]"><use href="#up"/></svg>
        <div class="mt-[137px] w-full h-[103px] bg-[#cdcdcd]"></div>
        <svg class="mt-[31px] w-[10px] h-[7px]"><use href="#down"/></svg>
      </div>
      <div class="w-[6px] shrink-0 border-r border-[#f0f0f0]"></div>
      <!-- File list -->
      <div class="flex-1 min-w-0 flex flex-col">
        <div class="h-[34px] shrink-0 flex items-center text-[#5b6b7c] text-[15.200px] relative">
          <div class="w-[340px] h-full flex items-center pl-[21px] border-r border-[#e5e5e5] relative">
            <span>名称</span>
            <svg class="absolute left-[173px] top-[1px] w-[10px] h-[6px] text-[#8a8a8a]" viewBox="0 0 14 10"><use href="#up"/></svg>
          </div>
          <div class="w-[180px] h-full flex items-center pl-[7px] border-r border-[#e5e5e5]">修改日期</div>
          <div class="w-[150px] h-full flex items-center pl-[6px] border-r border-[#e5e5e5]">类型</div>
          <div class="flex-1 pl-[7px]">大小</div>
        </div>
        <div class="flex-1 flex justify-center pt-[18px] text-[#6f6f6f] text-[15px]">没有与搜索条件匹配的项。</div>
        <div class="h-[19px] shrink-0 flex items-center bg-[#f0f0f0] mb-[1px] text-[#555]">
          <svg class="ml-[6px] w-[9px] h-[11px] -scale-x-100" viewBox="0 0 10 10"><use href="#cheveron"/></svg>
          <div class="ml-[6px] w-[660px] h-full bg-[#cdcdcd]"></div>
          <svg class="ml-auto mr-[5px] w-[9px] h-[11px]" viewBox="0 0 10 10"><use href="#cheveron"/></svg>
        </div>
      </div>
    </div>
    <!-- Footer -->
    <div class="flex-1 min-h-0 bg-[#f0f0f0] flex flex-col relative text-[#333]">
      <div class="mt-[14px] h-[31px] flex items-center">
        <span class="w-[150px] text-right text-[15.200px] whitespace-nowrap">文件名(N):</span>
        <div class="ml-[6px] w-[777px] h-full bg-white border-2 border-[#3b96e6] flex items-center pl-[3px] text-[15.500px] text-[#222] relative">
          <span>ooo</span><i class="block w-px h-[18px] bg-[#111]"></i>
          <svg class="absolute right-[4px] w-[12px] h-[8px] text-[#707070]"><use href="#down"/></svg>
        </div>
      </div>
      <div class="mt-[3px] h-[31px] flex items-center">
        <span class="w-[150px] text-right text-[15.200px] whitespace-nowrap">保存类型(T):</span>
        <div class="ml-[6px] w-[777px] h-full bg-[#e1e1e1] border border-[#adadad] flex items-center pl-[4px] text-[14.500px] text-[#333] relative">
          <span>Project Files (*.uvproj; *.uvprojx)</span>
          <svg class="absolute right-[4px] w-[12px] h-[8px] text-[#707070]"><use href="#down"/></svg>
        </div>
      </div>
      <div class="mt-[30px] flex items-center">
        <svg class="ml-[16px] w-[11px] h-[8px] text-[#555]"><use href="#up"/></svg>
        <span class="ml-[11px] text-[14.800px] text-[#3c4d60]">隐藏文件夹</span>
        <div class="ml-auto mr-[21px] flex gap-[18px] -mt-[8px]">
          <div class="w-[107px] h-[30px] bg-[#e1e1e1] border-[3px] border-[#0f78d4] flex items-center justify-center text-[14.500px] text-[#222]">保存(S)</div>
          <div class="w-[108px] h-[30px] bg-[#e1e1e1] border-2 border-[#adadad] flex items-center justify-center text-[14.500px] text-[#222]">取消</div>
        </div>
      </div>
      <svg class="absolute right-[1px] bottom-[2px] w-[11px] h-[11px]" viewBox="0 0 11 11"><path d="M8 0h2v2H8zM4 4h2v2H4zM8 4h2v2H8zM0 8h2v2H0zM4 8h2v2H4zM8 8h2v2H8z" fill="#b8b8b8"/></svg>
    </div>
  </div>

  <!-- Annotation arrows -->
  <svg class="absolute left-0 top-0 w-[1920px] h-[1080px] pointer-events-none" viewBox="0 0 1920 1080">
    <path d="M549 508L478 617l4 5-15 10 1-20 5 2z" fill="#f33d3d"/>
    <path d="M1126 615L1034 683l3 3-18 1 8-14 4 5z" fill="#f33d3d"/>
  </svg>
</div>
</body>
</html>
